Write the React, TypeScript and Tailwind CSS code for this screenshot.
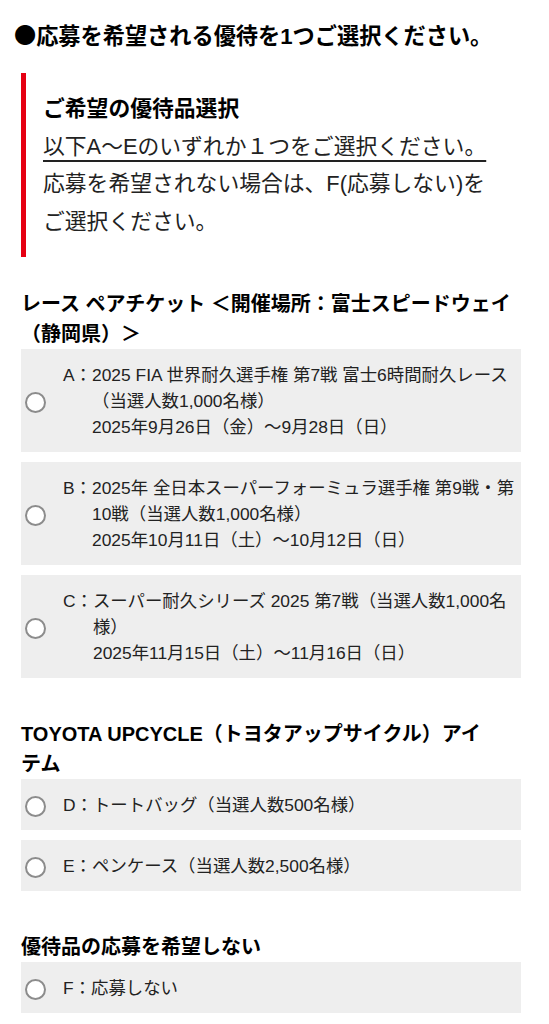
import type { JSX } from "react";

interface PrizeOption {
  key: string;
  lines: string[];
}

interface PrizeGroup {
  title: string[];
  options: PrizeOption[];
}

const groups: PrizeGroup[] = [
  {
    title: ["レース ペアチケット ＜開催場所：富士スピードウェイ", "（静岡県）＞"],
    options: [
      {
        key: "A",
        lines: [
          "2025 FIA 世界耐久選手権 第7戦 富士6時間耐久レース（当選人数1,000名様）",
          "2025年9月26日（金）〜9月28日（日）",
        ],
      },
      {
        key: "B",
        lines: [
          "2025年 全日本スーパーフォーミュラ選手権 第9戦・第10戦（当選人数1,000名様）",
          "2025年10月11日（土）〜10月12日（日）",
        ],
      },
      {
        key: "C",
        lines: [
          "スーパー耐久シリーズ 2025 第7戦（当選人数1,000名様）",
          "2025年11月15日（土）〜11月16日（日）",
        ],
      },
    ],
  },
  {
    title: ["TOYOTA UPCYCLE（トヨタアップサイクル）アイ", "テム"],
    options: [
      { key: "D", lines: ["トートバッグ（当選人数500名様）"] },
      { key: "E", lines: ["ペンケース（当選人数2,500名様）"] },
    ],
  },
  {
    title: ["優待品の応募を希望しない"],
    options: [{ key: "F", lines: ["応募しない"] }],
  },
];

function OptionRow({ option }: { option: PrizeOption }): JSX.Element {
  return (
    <label className="flex items-center bg-[#eeeeee] pb-[12px] pl-[4px] pr-[6px] pt-[13px]">
      <span className="h-[21px] w-[21px] shrink-0 translate-y-[2px] rounded-full border-2 border-[#8c8c8c] bg-white" />
      <span className="ml-[17px] flex text-[17.4px] leading-[26px] text-[#222222]">
        <span className="shrink-0">{option.key}：</span>
        <span>
          {option.lines.map((line, i) => (
            <span key={i} className="block">
              {line}
            </span>
          ))}
        </span>
      </span>
    </label>
  );
}

export default function App(): JSX.Element {
  return (
    <div
      className="min-h-[1024px] bg-white pb-6 text-black"
      style={{ fontFamily: '"Liberation Sans", "Noto Sans CJK JP", sans-serif' }}
    >
      <h1 className="pl-[14px] pt-[19px] text-[22.2px] font-bold leading-[30px]">
        <span style={{ fontFamily: '"Noto Sans CJK JP", sans-serif' }}>●</span>
        応募を希望される優待を1つご選択ください。
      </h1>

      <div className="ml-[21px] mt-[21px] border-l-[5px] border-[#e60012] pb-[16px] pl-[17px] pt-[17px] text-[21.8px] leading-[37.7px] text-[#222222]">
        <p className="font-bold text-black">ご希望の優待品選択</p>
        <p>
          <span className="underline decoration-[1.5px] underline-offset-[6px]">
            以下A〜Eのいずれか１つをご選択ください。
          </span>
          <br />
          応募を希望されない場合は、F(応募しない)を
          <br />
          ご選択ください。
        </p>
      </div>

      <div className="ml-[21px] w-[500px]">
        {groups.map((group, gi) => (
          <section key={gi} className={gi === 0 ? "mt-[32px]" : "mt-[41px]"}>
            <h2 className="text-[20px] font-bold leading-[30px]">
              {group.title.map((part, i) => (
                <span key={i} className="block">
                  {part}
                </span>
              ))}
            </h2>
            <div className="flex flex-col gap-[10px]">
              {group.options.map((option) => (
                <OptionRow key={option.key} option={option} />
              ))}
            </div>
          </section>
        ))}
      </div>
    </div>
  );
}
